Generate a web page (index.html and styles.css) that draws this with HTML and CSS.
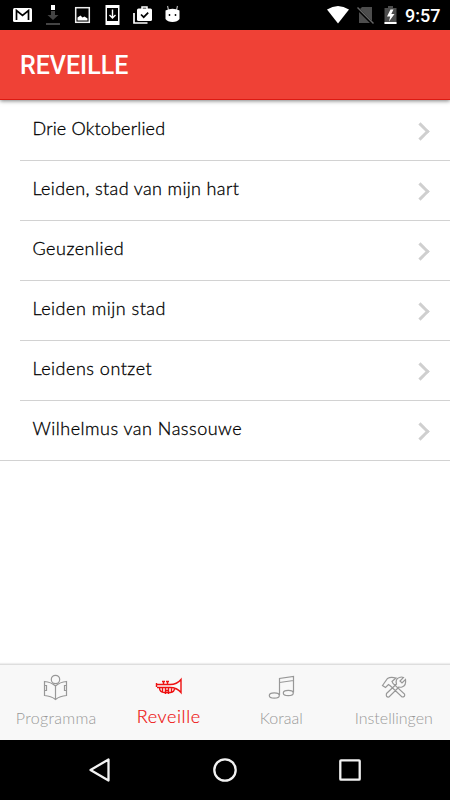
FILE: index.html
```
<!DOCTYPE html>
<html lang="nl">
<head>
<meta charset="utf-8">
<title>Reveille</title>
<link rel="stylesheet" href="styles.css">
</head>
<body>
<div class="status">
  <svg class="notifications" width="190" height="30" viewBox="0 0 190 30">
    <rect x="13" y="8" width="19" height="14" rx="1.5" fill="#fff"/>
    <path d="M16.500 20V10.500L22.500 15.500L28.500 10.500V20" fill="none" stroke="#000" stroke-width="1.700"/>
    <path d="M51 5h4v5h-4z" fill="#fff"/>
    <path d="M51 11h4v4h3.500L53 20l-5.500-5H51zM46 23h14v2H46z" fill="#444"/>
    <rect x="75.700" y="7.700" width="13.600" height="14.600" fill="none" stroke="#eee" stroke-width="1.500"/>
    <path d="M77.500 20.500v-3l3-2 2 2 2-1 3 2v2z" fill="#fff"/>
    <path d="M105.500 5h14v20h-14zM107 8v13h11V8z" fill="#fff" fill-rule="evenodd"/>
    <path d="M112.500 9.500v8M109.500 15l3 3 3-3" fill="none" stroke="#fff" stroke-width="1.400"/>
    <path d="M134 13v10h13.500" fill="none" stroke="#fff" stroke-width="1.700"/>
    <path d="M142 9V7h5v2" fill="none" stroke="#fff" stroke-width="1.500"/>
    <rect x="137" y="8.500" width="15" height="12.500" rx="1.500" fill="#fff"/>
    <path d="M141 14.500l2.700 2.700 4.500-4.500" fill="none" stroke="#000" stroke-width="1.700"/>
    <path d="M168.500 10l-1-4M176.500 10l1-4" stroke="#aaa" stroke-width="1.200"/>
    <path d="M165.500 10.500Q172.500 7 179.500 10.500V19q-2 3-7 3t-7-3z" fill="#fff"/>
    <circle cx="169.500" cy="15" r=".9"/><circle cx="175.500" cy="15" r=".9"/>
  </svg>
  <div class="system">
    <svg width="83" height="30" viewBox="322 0 83 30">
      <path d="M327 9.500Q338 2.500 349 9.500L338 23.500z" fill="#fff"/>
      <path d="M362 7h10v16h-13V10z" fill="#4d4d4d"/>
      <path d="M357 8l16 16" stroke="#000" stroke-width="3"/>
      <path d="M357.500 7.500l16 16" stroke="#666" stroke-width="1.500"/>
      <path d="M388 6h5v2h3.500v16h-12V8h3.500z" fill="#4d4d4d"/>
      <path d="M384.500 22h12v2h-12zM390.500 9.500l-3.500 7h3.200l-1.200 5 5.500-7.500h-3.200l2.200-4.500z" fill="#fff"/>
    </svg>
    <span class="clock">9:57</span>
  </div>
</div>
<header class="header"><h1>REVEILLE</h1></header>
<main>
  <ul class="songs">
    <li><a><span class="tight">Drie Oktoberlied</span><i class="chevron"></i></a></li>
    <li><a><span class="snug">Leiden, stad van mijn hart</span><i class="chevron"></i></a></li>
    <li><a><span>Geuzenlied</span><i class="chevron"></i></a></li>
    <li><a><span>Leiden mijn stad</span><i class="chevron"></i></a></li>
    <li><a><span>Leidens ontzet</span><i class="chevron"></i></a></li>
    <li><a><span>Wilhelmus van Nassouwe</span><i class="chevron"></i></a></li>
  </ul>
</main>
<nav class="tabs">
  <a class="tab"><svg width="28" height="28" viewBox="42 673 28 28"><circle cx="55.500" cy="679.500" r="4.200"/><path d="M44.500 681.500Q51 682 55.500 686Q60 682 66.500 681.500V695.500Q60 696 55.500 699.500Q51 696 44.500 695.500zM55.500 686v13.500M44.500 685.500h2v5h-2M66.500 685.500h-2v5h2"/></svg><span class="wide">Programma</span></a>
  <a class="tab active"><svg width="28" height="28" viewBox="155 673 28 28"><path d="M156.500 683v4M156 684.500h14Q177 684.500 181 679.500v13Q177 687.500 170 687.500H157M159.500 687.500q0 5 5 5h6q4 0 4-5M163.500 681.500v3.500M167.500 681.500v3.500M162 681.500h3M166 681.500h3M162.500 688v4M165.500 688v6M168.500 688v6M165.500 690.500h3M171.500 688v4"/></svg><span>Reveille</span></a>
  <a class="tab"><svg width="28" height="28" viewBox="267 673 28 28"><path d="M279.500 695V678.500L293.500 676.500V692.500M279.500 682.500L293.500 680.500"/><ellipse cx="274.300" cy="695.500" rx="5" ry="2.700"/><ellipse cx="288.300" cy="693" rx="5" ry="2.700"/></svg><span>Koraal</span></a>
  <a class="tab"><svg width="28" height="28" viewBox="380 673 28 28"><path d="M382.500 685.500l5-7q3-2 8.500-.5l-4 3.500 1 2L404.500 694q1 3-2.500 3L390.500 686l-2-1.500-3 3zM386.500 693.500l10-9.500q-1.500-5 3-6.500 2-1 4 0l-3.500 3.500 2 2 3.500-3.500q1 6-3.500 7.500-1.500.5-3 0l-10 10q-3.500.5-2.500-3.500z"/></svg><span>Instellingen</span></a>
</nav>
<div class="system-nav">
  <svg width="30" height="30" viewBox="0 0 30 30"><path d="M5.500 15L23.500 4.500v21z"/></svg>
  <svg width="30" height="30" viewBox="0 0 30 30"><circle cx="15" cy="15" r="10.700"/></svg>
  <svg width="30" height="30" viewBox="0 0 30 30"><rect x="5.300" y="5.300" width="19.400" height="19.400" rx=".7"/></svg>
</div>
</body>
</html>
```
FILE: styles.css
```
* { box-sizing: border-box; }
body {
  margin: 0;
  width: 450px;
  height: 800px;
  display: flex;
  flex-direction: column;
  overflow: hidden;
  background: #fff;
  color: #000;
  font-family: Lato, "Open Sans", sans-serif;
}
svg { display: block; }
.status {
  height: 30px;
  background: #000;
  display: flex;
  justify-content: space-between;
}
.system { display: flex; padding-right: 9px; }
.clock {
  width: 36px;
  color: #fff;
  font: 500 18px/31px Roboto, sans-serif;
  white-space: nowrap;
}
.header {
  height: 70px;
  padding-left: 20px;
  background: #ef4136;
  border-bottom: 1px solid #dc1a12;
  box-shadow: 0 1px 4px rgba(0, 0, 0, .5);
  color: #fff;
  z-index: 1;
}
h1 {
  margin: 0;
  font: 500 25px/72px Roboto, sans-serif;
}
main { flex: 1; }
.songs {
  margin: 0;
  padding: 0 0 0 20px;
  list-style: none;
  height: 361px;
  border-bottom: 1px solid #d2d2d2;
}
.songs li { height: 60px; }
.songs a {
  height: 61px;
  padding: 0 20px 0 12.5px;
  display: flex;
  align-items: center;
  justify-content: space-between;
  border-bottom: 1px solid #d2d2d2;
  font-size: 18px;
  font-weight: 300;
  letter-spacing: .5px;
  line-height: 24px;
  white-space: nowrap;
}
.songs span { padding-bottom: 4px; -webkit-text-stroke: .3px #000; }
.songs .tight { letter-spacing: .18px; }
.songs .snug { letter-spacing: .36px; }
.chevron {
  width: 13px;
  height: 13px;
  margin: 2px 3px 0 0;
  border: solid #cfcfcf;
  border-width: 3px 3px 0 0;
  transform: rotate(45deg);
}
.tabs {
  height: 76px;
  display: grid;
  grid-template-columns: repeat(4, 1fr);
  background: #f8f8f8;
  border-top: 1px solid #dedede;
  box-shadow: 0 -1px 1px #eee;
}
.tab {
  display: flex;
  flex-direction: column;
  align-items: center;
  padding-top: 8px;
  color: #989898;
  font-size: 16px;
  font-weight: 300;
  line-height: 20px;
  white-space: nowrap;
}
.tab span { margin-top: 7px; }
.tab .wide { letter-spacing: .3px; }
.tab svg { fill: none; stroke: currentColor; stroke-width: 1.200; }
.tab.active { color: #ee1111; font-size: 18px; letter-spacing: .6px; }
.tab.active svg { stroke-width: 1.400; }
.tab.active span { margin-top: 5px; -webkit-text-stroke: .2px #e11; }
.system-nav {
  height: 60px;
  padding: 0 85px;
  background: #000;
  display: flex;
  align-items: center;
  justify-content: space-between;
}
.system-nav svg { fill: none; stroke: #f2f2f2; stroke-width: 2.300; stroke-linejoin: round; }
```
